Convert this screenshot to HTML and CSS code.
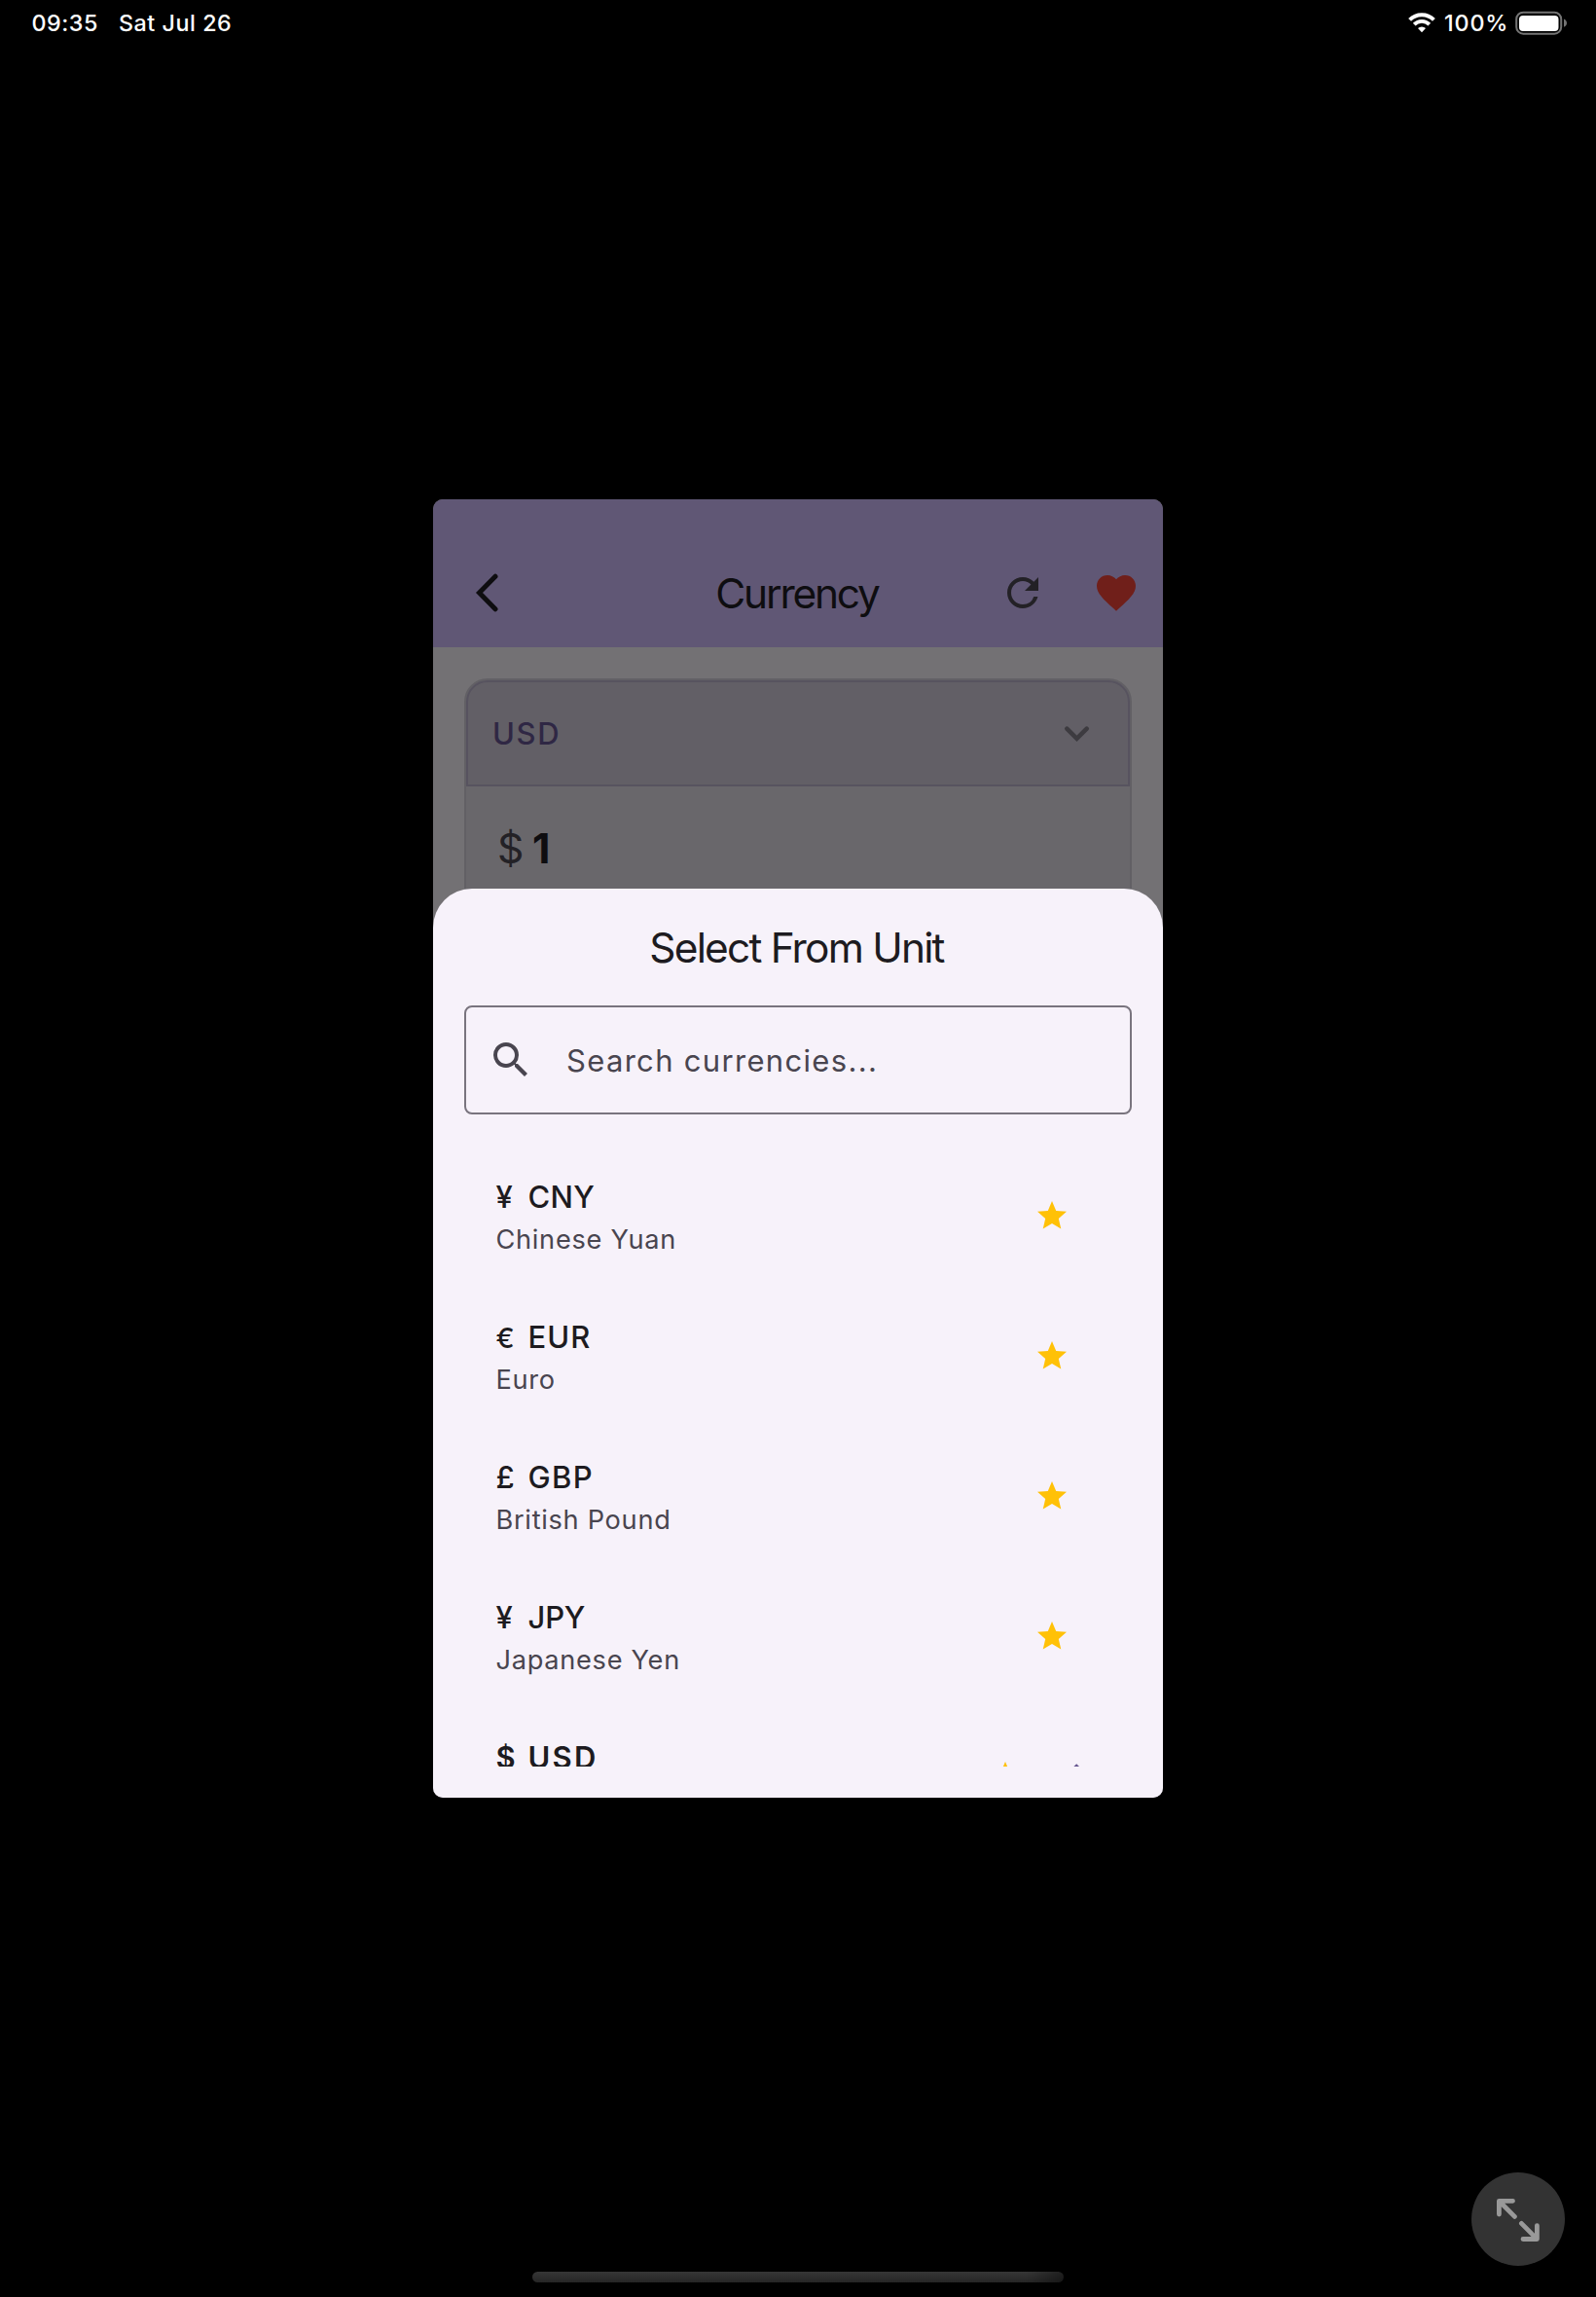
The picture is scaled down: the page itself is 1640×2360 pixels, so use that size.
FILE: index.html
```html
<!DOCTYPE html>
<html lang="en">
<head>
<meta charset="utf-8">
<title>Currency</title>
<link rel="stylesheet" href="styles.css">
</head>
<body>
<div class="screen">
  <div class="status">
    <span class="time">09:35</span>
    <span class="date">Sat Jul 26</span>
    <svg class="wifi" width="28" height="21" viewBox="0 0 28 21">
      <g fill="none" stroke="#fff">
        <path d="M1.6 7.4a17.6 17.6 0 0 1 24.8 0" stroke-width="4"/>
        <path d="M6.2 12.2a11 11 0 0 1 15.6 0" stroke-width="3.8"/>
      </g>
      <path d="M14 20.2l-4-4.1a5.7 5.7 0 0 1 8 0z" fill="#fff"/>
    </svg>
    <span class="percent">100%</span>
    <svg class="battery" width="54" height="26" viewBox="0 0 54 26">
      <rect x="1.2" y="1.7" width="46" height="22" rx="7" fill="none" stroke="#747474" stroke-width="2"/>
      <rect x="4" y="5" width="40.5" height="16" rx="4" fill="#fff"/>
      <path d="M50 8.4c4 1.8 4 6.6 0 8.4z" fill="#747474"/>
    </svg>
  </div>

  <main class="stage">
    <div class="app">
      <header class="toolbar">
        <div class="toolbar-start">
          <svg width="48" height="48" viewBox="0 0 48 48" fill="none" stroke="#0e0d10" stroke-width="5" stroke-linecap="round"><path d="M32 7.2 15.5 24 32 40.8"/></svg>
        </div>
        <h1 class="toolbar-title">Currency</h1>
        <div class="toolbar-end">
          <svg width="48" height="48" viewBox="0 0 24 24" fill="#232126"><path d="M17.65 6.35A7.958 7.958 0 0 0 12 4c-4.42 0-7.99 3.58-7.99 8s3.57 8 7.99 8c3.73 0 6.84-2.55 7.73-6h-2.08A5.99 5.99 0 0 1 12 18c-3.31 0-6-2.69-6-6s2.69-6 6-6c1.66 0 3.14.69 4.22 1.78L13 11h7V4z"/></svg>
          <svg width="48" height="48" viewBox="0 0 24 24" fill="#701f1a"><path d="M12 21.35l-1.45-1.32C5.4 15.36 2 12.28 2 8.5 2 5.42 4.42 3 7.5 3c1.74 0 3.41.81 4.5 2.09C13.09 3.81 14.76 3 16.5 3 19.58 3 22 5.42 22 8.5c0 3.78-3.4 6.86-8.55 11.54z"/></svg>
        </div>
      </header>

      <section class="card">
        <div class="unit">
          <span>USD</span>
          <svg width="48" height="48" viewBox="0 0 48 48" fill="none" stroke="#3d3b40" stroke-width="4.6" stroke-linecap="round"><path d="M14.3 18.6 24.5 28.8 34.7 18.6"/></svg>
        </div>
        <div class="amount"><span class="amount-sign">$</span><span class="amount-value">1</span></div>
      </section>

      <section class="sheet">
        <h2 class="sheet-title">Select From Unit</h2>
        <div class="search">
          <svg width="48" height="48" viewBox="0 0 24 24" fill="#49454f"><path d="M15.5 14h-.79l-.28-.27A6.471 6.471 0 0 0 16 9.5 6.5 6.5 0 1 0 9.5 16c1.61 0 3.09-.59 4.23-1.57l.27.28v.79l5 4.99L20.49 19zm-6 0C7.01 14 5 11.99 5 9.5S7.01 5 9.5 5 14 7.01 14 9.5 11.99 14 9.5 14z"/></svg>
          <span>Search currencies...</span>
        </div>
        <ul class="list">
          <li class="row cny">
            <div><div class="code"><span class="sign">¥</span>CNY</div><div class="name">Chinese Yuan</div></div>
            <svg class="star" viewBox="0 0 24 24"><path d="M12 17.27 18.18 21l-1.64-7.03L22 9.24l-7.19-.61L12 2 9.19 8.63 2 9.24l5.46 4.73L5.82 21z"/></svg>
          </li>
          <li class="row eur">
            <div><div class="code"><span class="sign">€</span>EUR</div><div class="name">Euro</div></div>
            <svg class="star" viewBox="0 0 24 24"><path d="M12 17.27 18.18 21l-1.64-7.03L22 9.24l-7.19-.61L12 2 9.19 8.63 2 9.24l5.46 4.73L5.82 21z"/></svg>
          </li>
          <li class="row gbp">
            <div><div class="code"><span class="sign">£</span>GBP</div><div class="name">British Pound</div></div>
            <svg class="star" viewBox="0 0 24 24"><path d="M12 17.27 18.18 21l-1.64-7.03L22 9.24l-7.19-.61L12 2 9.19 8.63 2 9.24l5.46 4.73L5.82 21z"/></svg>
          </li>
          <li class="row jpy">
            <div><div class="code"><span class="sign">¥</span>JPY</div><div class="name">Japanese Yen</div></div>
            <svg class="star" viewBox="0 0 24 24"><path d="M12 17.27 18.18 21l-1.64-7.03L22 9.24l-7.19-.61L12 2 9.19 8.63 2 9.24l5.46 4.73L5.82 21z"/></svg>
          </li>
          <li class="row selected">
            <div><div class="code"><span class="sign">$</span>USD</div></div>
            <svg class="star" viewBox="0 0 24 24"><path d="M12 17.27 18.18 21l-1.64-7.03L22 9.24l-7.19-.61L12 2 9.19 8.63 2 9.24l5.46 4.73L5.82 21z"/></svg>
            <svg class="check" viewBox="0 0 24 24"><path d="M9 16.17 4.83 12l-1.42 1.41L9 19 21 7l-1.41-1.41z"/></svg>
          </li>
        </ul>
      </section>
    </div>
  </main>

  <div class="expand">
    <svg width="96" height="96" viewBox="0 0 96 96" fill="none" stroke="#999" stroke-width="4.8" stroke-linecap="round" stroke-linejoin="round"><path d="M42.5 29.3H28.4V43M28.8 29.7 44.4 45.4M53 68.5H67.4V54.6M67 68.1 51.4 52.4"/></svg>
  </div>
  <div class="home-bar"></div>
</div>
</body>
</html>
```
FILE: styles.css
```css
* { box-sizing: border-box; margin: 0; padding: 0; }

body {
  background: #000;
  font-family: Inter, "Liberation Sans", sans-serif;
}

svg { display: block; flex: none; }

.screen {
  position: relative;
  display: grid;
  grid-template-rows: 47px 1fr 47px;
  width: 1640px;
  height: 2360px;
  overflow: hidden;
  background: #000;
}

/* Status bar */
.status {
  display: flex;
  padding: 0 29px 0 32.5px;
  color: #fff;
  font-size: 23.3px;
  font-weight: 500;
  line-height: 47px;
  letter-spacing: 0.53px;
  white-space: nowrap;
}
.time { width: 89.5px; }
.wifi { margin: 13px 9px 0 auto; }
.percent { width: 73px; letter-spacing: 0.85px; }
.battery { margin-top: 11px; }

/* App window */
.stage { display: flex; align-items: center; justify-content: center; }

.app {
  position: relative;
  width: 750px;
  height: 1334px;
  border-radius: 10px;
  overflow: hidden;
  background: #737174;
}

.toolbar {
  display: grid;
  grid-template-columns: 1fr auto 1fr;
  align-items: center;
  height: 152px;
  padding: 40px 24px 0 32px;
  background: #605775;
}
.toolbar-title {
  padding-top: 2px;
  color: #0e0d10;
  font-size: 42.4px;
  font-weight: 400;
  line-height: 56px;
  letter-spacing: -2.2px;
  margin: 0 10px 0 0;
}
.toolbar-end { display: flex; justify-content: flex-end; gap: 48px; }

.card {
  margin: 32px;
  height: 400px;
  border: 2px solid #626065;
  border-radius: 24px;
  background: #69676b;
}
.unit {
  display: flex;
  align-items: center;
  justify-content: space-between;
  height: 109px;
  padding: 0 29px 0 25px;
  border: 2px solid #57535f;
  border-radius: 22px 22px 0 0;
  background: #625f66;
  color: #2f2744;
  font-size: 31px;
  font-weight: 500;
  letter-spacing: 1.6px;
}
.amount {
  display: flex;
  padding: 34px 0 0 32px;
  font-size: 42.7px;
  line-height: 60px;
}
.amount-sign { width: 36px; color: #232126; }
.amount-value { color: #0e0d10; font-weight: 700; }

/* Bottom sheet */
.sheet {
  position: absolute;
  inset: 400px 0 0;
  display: flex;
  flex-direction: column;
  padding: 32px;
  border-radius: 40px 40px 0 0;
  background: #f7f2fa;
  color: #1d1b20;
}
.sheet-title {
  padding: 1px 3px 0 0;
  margin-bottom: -1px;
  font-size: 42.4px;
  font-weight: 400;
  line-height: 56px;
  letter-spacing: -1.8px;
  text-align: center;
}
.search {
  display: flex;
  flex: none;
  align-items: center;
  gap: 33px;
  height: 112px;
  margin: 32px 0;
  padding-left: 22px;
  border: 2px solid #79747e;
  border-radius: 8px;
  color: #49454f;
  font-size: 31px;
  letter-spacing: 1.32px;
}

.list {
  flex: 1;
  min-height: 0;
  overflow: hidden;
  list-style: none;
}
.row {
  display: flex;
  align-items: flex-start;
  height: 144px;
  padding: 29px 64px 0 32.5px;
}
.code {
  font-size: 31px;
  font-weight: 500;
  line-height: 48px;
  white-space: nowrap;
}
.sign { display: inline-block; width: 33px; letter-spacing: 0; }
.name {
  color: #49454f;
  font-size: 27.2px;
  line-height: 40px;
  letter-spacing: 0.7px;
}
.cny .code { letter-spacing: 0.3px; }
.eur .code { letter-spacing: 1px; }
.gbp .code { letter-spacing: 1.3px; }
.jpy .code { letter-spacing: -0.2px; }
.eur .sign { font-size: 28.5px; line-height: 40px; }
.star {
  width: 36px;
  height: 36px;
  margin: 25px 0 0 auto;
  fill: #ffc107;
}
.selected { padding-right: 48px; }
.selected .code { font-weight: 600; letter-spacing: 2.3px; }
.check {
  width: 48px;
  height: 48px;
  margin: 19px 0 0 16px;
  fill: #65558f;
}

/* System overlays */
.expand {
  position: absolute;
  right: 32px;
  bottom: 32px;
  border-radius: 50%;
  background: #333;
}
.home-bar {
  position: absolute;
  left: 547px;
  bottom: 15px;
  width: 546px;
  height: 11px;
  border-radius: 6px;
  background: linear-gradient(90deg, transparent 93%, rgba(0, 0, 0, 0.4)), linear-gradient(#363636, #262626);
}
```
